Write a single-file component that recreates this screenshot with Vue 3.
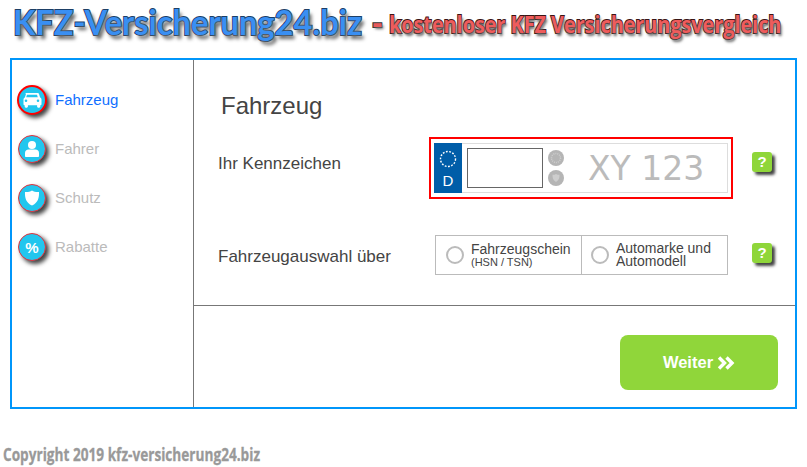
<template>
  <div class="page">
    <header class="head">
      <span class="logo">KFZ-Versicherung24.biz</span>
      <span class="dash">-</span>
      <span class="claim">kostenloser KFZ Versicherungsvergleich</span>
    </header>

    <div class="frame">
      <aside class="side">
        <div
          v-for="(step, index) in steps"
          :key="step.label"
          class="step"
          :class="{ active: index === 0 }"
        >
          <span class="bubble">
            <svg v-if="step.icon === 'car'" width="20" height="16" viewBox="0 0 20 16">
              <path fill="#fff" fill-rule="evenodd" d="M4.500 1h11c.8 0 1.400.5 1.600 1.200l1 3.200c.8.4 1.400 1.200 1.400 2.100v4.800c0 .5-.4.900-.9.900h-.3v1.400c0 .6-.5 1.100-1.100 1.100h-1c-.6 0-1.100-.5-1.100-1.100v-1.400H5.900v1.400c0 .6-.5 1.100-1.100 1.100h-1c-.6 0-1.100-.5-1.100-1.100v-1.400h-.3c-.5 0-.9-.4-.9-.9V7.500c0-.9.600-1.700 1.400-2.100l1-3.200C3.100 1.500 3.700 1 4.500 1zM5 2.800 4.200 5.300h11.600L15 2.800zM4 7.400a1.300 1.300 0 1 0 0 2.600 1.300 1.300 0 0 0 0-2.600zm12 0a1.300 1.300 0 1 0 0 2.600 1.300 1.300 0 0 0 0-2.600z" />
            </svg>
            <svg v-else-if="step.icon === 'user'" width="18" height="18" viewBox="0 0 18 18">
              <circle cx="9" cy="5" r="4" fill="#fff" />
              <path fill="#fff" d="M2 16v-3c0-2 1.500-3.500 3.500-3.500h7c2 0 3.500 1.500 3.500 3.500v3c0 .5-.4 1-1 1H3c-.6 0-1-.5-1-1z" />
            </svg>
            <svg v-else-if="step.icon === 'shield'" width="18" height="18" viewBox="0 0 18 18">
              <path fill="#fff" d="M9 1.500c2 1.300 4.500 1.700 7 1.500.3 5.500-1 11-7 13.500C3 14 1.700 8.500 2 3c2.500.2 5-.2 7-1.500z" />
            </svg>
            <span v-else class="percent">%</span>
          </span>
          <span class="step-label">{{ step.label }}</span>
        </div>
      </aside>

      <main class="main">
        <section class="form">
          <h1 class="title">Fahrzeug</h1>

          <div class="row plate-row">
            <label class="row-label">Ihr Kennzeichen</label>
            <div class="plate-box">
              <div class="plate">
                <div class="eu">
                  <svg width="18" height="18" viewBox="0 0 18 18">
                    <circle cx="9" cy="9" r="7.500" fill="none" stroke="#fff" stroke-width="1.400" stroke-dasharray="1.800 1.500" />
                  </svg>
                  <span>D</span>
                </div>
                <input class="plate-input" type="text" />
                <div class="seals">
                  <svg class="seal" width="16" height="16" viewBox="0 0 16 16">
                    <circle cx="8" cy="8" r="8" fill="#b5b5b5" />
                    <circle cx="8" cy="8" r="4.500" fill="none" stroke="#cdcdcd" stroke-width="1.500" stroke-dasharray="1 1" />
                  </svg>
                  <svg class="seal" width="16" height="16" viewBox="0 0 16 16">
                    <circle cx="8" cy="8" r="8" fill="#b5b5b5" />
                    <path fill="#cdcdcd" d="M8 4c1.200.7 2.500.9 3.500.8.100 3-.6 5.700-3.500 7.200-2.900-1.500-3.600-4.200-3.500-7.200 1 .1 2.300-.1 3.500-.8z" />
                  </svg>
                </div>
                <span class="plate-hint">XY 123</span>
              </div>
            </div>
            <span class="help">?</span>
          </div>

          <div class="row choice-row">
            <label class="row-label">Fahrzeugauswahl über</label>
            <div class="choice">
              <div class="option first">
                <span class="radio"></span>
                <span class="option-text">Fahrzeugschein<small>(HSN / TSN)</small></span>
              </div>
              <div class="option second">
                <span class="radio"></span>
                <span class="option-text">Automarke und<br />Automodell</span>
              </div>
            </div>
            <span class="help">?</span>
          </div>
        </section>

        <footer class="actions">
          <button class="next" type="button">
            Weiter
            <svg width="18" height="14" viewBox="0 0 18 14">
              <path fill="none" stroke="#fff" stroke-width="3.400" d="M2 1.500 7.500 7 2 12.500M9.500 1.500 15 7l-5.500 5.500" />
            </svg>
          </button>
        </footer>
      </main>
    </div>

    <p class="copy">Copyright 2019 kfz-versicherung24.biz</p>
  </div>
</template>

<script setup>
const steps = [
  { label: 'Fahrzeug', icon: 'car' },
  { label: 'Fahrer', icon: 'user' },
  { label: 'Schutz', icon: 'shield' },
  { label: 'Rabatte', icon: 'percent' }
]
</script>

<style>
body {
  margin: 0;
  background: #fff;
}
</style>

<style scoped>
.page {
  width: 807px;
  height: 467px;
  overflow: hidden;
  font-family: "Liberation Sans", Arial, sans-serif;
  color: #444;
}
.head {
  height: 58px;
  display: flex;
  align-items: center;
  white-space: nowrap;
  font-family: "Open Sans", sans-serif;
  font-weight: 700;
  line-height: 1;
}
.logo {
  margin: -15px -26px 0 13px;
  transform: scaleX(0.932);
  transform-origin: left center;
  font-family: Lato, sans-serif;
  font-size: 35px;
  color: #3a8ff2;
  -webkit-text-stroke: 2px #1d3f66;
  paint-order: stroke fill;
  text-shadow: 3px 4px 4px #666;
  flex: none;
}
.dash {
  margin: -14px 0 0 11px;
  font-size: 30px;
  color: #e85a5a;
  -webkit-text-stroke: 2px #333;
  paint-order: stroke fill;
  text-shadow: 2px 2px 3px #666;
  flex: none;
}
.claim {
  margin: -10px 0 0 7px;
  transform: scaleX(0.824);
  transform-origin: left center;
  font-size: 24px;
  color: #ee5c5c;
  -webkit-text-stroke: 2px #3a1414;
  paint-order: stroke fill;
  text-shadow: 2px 3px 3px #666;
  flex: none;
}
.frame {
  box-sizing: border-box;
  width: 787px;
  height: 351px;
  margin-left: 10px;
  border: 2px solid #0096fa;
  display: flex;
}
.side {
  box-sizing: border-box;
  width: 182px;
  flex: none;
  border-right: 1px solid #777;
  padding-top: 25px;
  display: flex;
  flex-direction: column;
  gap: 19px;
}
.step {
  height: 30px;
  display: flex;
  align-items: center;
  padding-left: 5px;
  gap: 8px;
  font-size: 15px;
  color: #bbb;
}
.step.active {
  color: #0f6fff;
}
.step-label {
  margin-bottom: 2px;
}
.bubble {
  box-sizing: border-box;
  width: 28px;
  height: 28px;
  margin: 0 1px;
  border-radius: 50%;
  background: #22c6ee;
  border: 1px solid #e8303a;
  box-shadow: 3px 3px 4px #444;
  display: flex;
  align-items: center;
  justify-content: center;
  flex: none;
}
.step.active .bubble {
  width: 30px;
  height: 30px;
  margin: 0;
  border: 2px solid #f00;
}
.percent {
  color: #fff;
  font-size: 15px;
  font-weight: 700;
}
.main {
  flex: 1;
  display: flex;
  flex-direction: column;
  min-width: 0;
}
.form {
  box-sizing: border-box;
  height: 246px;
  border-bottom: 1px solid #777;
  padding: 31px 0 0 24px;
}
.title {
  margin: 0 0 0 3px;
  height: 30px;
  line-height: 30px;
  font-size: 24px;
  font-weight: 400;
  color: #444;
}
.row {
  display: flex;
  align-items: center;
}
.row-label {
  width: 211px;
  font-size: 17px;
  flex: none;
}
.plate-row {
  margin-top: 16px;
}
.plate-row .row-label {
  margin-bottom: 8px;
}
.plate-box {
  box-sizing: border-box;
  width: 304px;
  height: 62px;
  border: 2px solid #f00;
  padding: 4px 3px;
  flex: none;
}
.plate {
  box-sizing: border-box;
  width: 294px;
  height: 50px;
  border: 1px solid #ddd;
  display: flex;
  align-items: center;
}
.eu {
  box-sizing: border-box;
  width: 28px;
  height: 50px;
  margin-left: -1px;
  background: #005da8;
  color: #fff;
  font-size: 15px;
  display: flex;
  flex-direction: column;
  align-items: center;
  gap: 5px;
  padding-top: 7px;
  line-height: 16px;
  flex: none;
}
.plate-input {
  box-sizing: border-box;
  width: 76px;
  height: 40px;
  margin-left: 5px;
  border: 1px solid #666;
  background: #fff;
  outline: none;
  flex: none;
}
.seals {
  margin-left: 5px;
  display: flex;
  flex-direction: column;
  gap: 4px;
}
.seal {
  display: block;
}
.plate-hint {
  margin-left: 24px;
  font-family: "DejaVu Sans", sans-serif;
  font-size: 33px;
  color: #bbb;
  white-space: nowrap;
}
.help {
  box-sizing: border-box;
  width: 20px;
  height: 20px;
  border-radius: 3px;
  background: #8fd63a;
  color: #fff;
  font-size: 15px;
  font-weight: 700;
  line-height: 19px;
  text-align: center;
  box-shadow: 3px 3px 3px #444;
  flex: none;
}
.plate-row .help {
  margin: 0 0 12px 19px;
}
.choice-row {
  margin-top: 36px;
}
.choice-row .row-label {
  margin-top: 3px;
}
.choice {
  box-sizing: border-box;
  width: 293px;
  height: 40px;
  margin-left: 6px;
  border: 1px solid #bbb;
  display: flex;
  flex: none;
}
.choice-row .help {
  margin: 0 0 4px 24px;
}
.option {
  flex: 1;
  display: flex;
  align-items: center;
  padding-left: 10px;
  gap: 7px;
}
.option.first {
  flex: none;
  width: 146px;
  box-sizing: border-box;
  border-right: 1px solid #bbb;
}
.option.second {
  padding-left: 9px;
}
.radio {
  box-sizing: border-box;
  width: 18px;
  height: 18px;
  border: 2px solid #bbb;
  border-radius: 50%;
  flex: none;
}
.option-text {
  font-size: 14px;
  line-height: 13px;
  color: #444;
  white-space: nowrap;
}
.option-text small {
  display: block;
  font-size: 11px;
  line-height: 12px;
}
.actions {
  flex: 1;
  display: flex;
  justify-content: flex-end;
  align-items: flex-start;
  padding: 29px 17px 0 0;
}
.next {
  width: 158px;
  height: 55px;
  border: 0;
  border-radius: 8px;
  background: #90d63a;
  color: #fff;
  font-family: "Liberation Sans", Arial, sans-serif;
  font-size: 16.500px;
  font-weight: 700;
  display: flex;
  align-items: center;
  justify-content: center;
  gap: 4px;
}
.copy {
  margin: 35px 0 0 3px;
  width: 360px;
  font-family: "Open Sans", sans-serif;
  font-size: 18px;
  line-height: 20px;
  font-weight: 700;
  color: #999;
  -webkit-text-stroke: 0.3px #999;
  white-space: nowrap;
  transform: scaleX(0.757);
  transform-origin: left center;
}
</style>
